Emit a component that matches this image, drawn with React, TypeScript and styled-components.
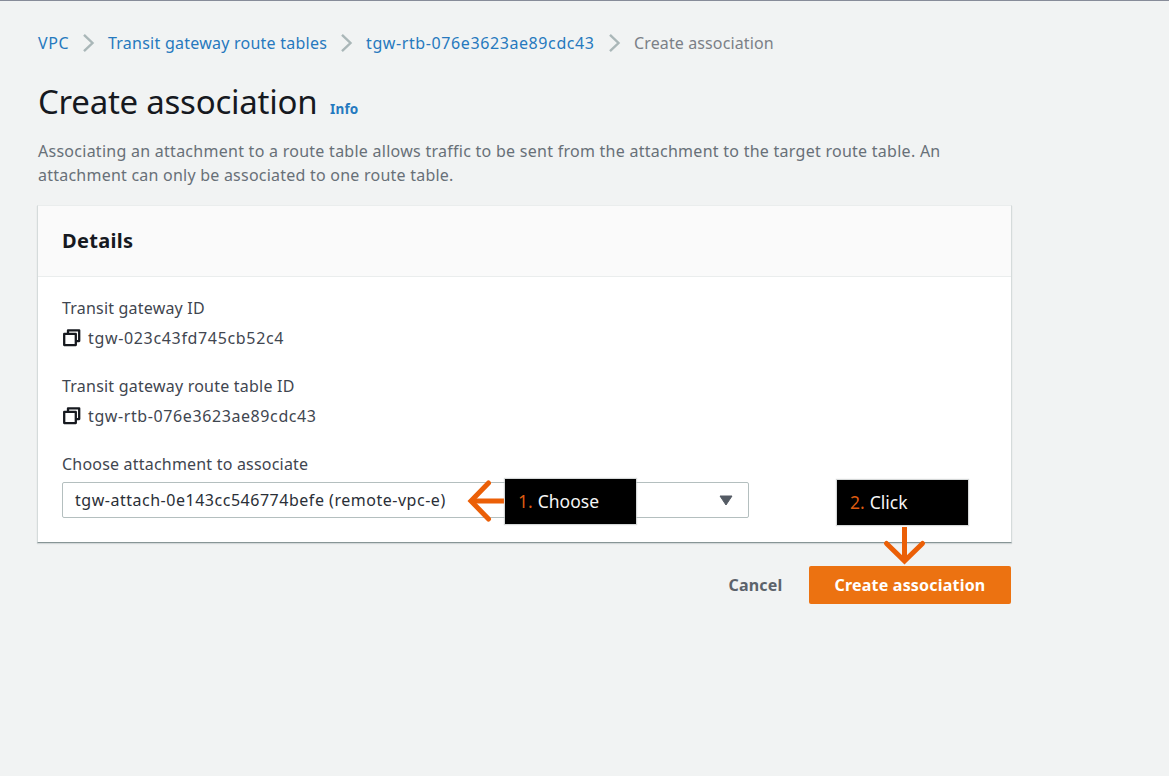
import React from 'react';
import styled, { createGlobalStyle } from 'styled-components';

const GlobalStyle = createGlobalStyle`
  * { box-sizing: border-box; }
  body { margin: 0; background: #f1f3f3; }
`;

const Page = styled.div`
  min-height: 776px;
  padding: 29px 0 0 37px;
  border-top: 1px solid #878c99;
  background: #f1f3f3;
  color: #3f4650;
  font: 16px/24px 'Noto Sans', 'Open Sans', sans-serif;
  overflow: hidden;
`;

const Content = styled.main`
  width: 974px;
`;

const Text = styled.span<{ $track?: number }>`
  letter-spacing: ${(p) => p.$track ?? 0}px;
  white-space: nowrap;
`;

const Breadcrumbs = styled.nav`
  display: flex;
  align-items: center;
  height: 26px;
  padding-left: 1px;
`;

const Crumb = styled(Text)<{ $current?: boolean; $width: number }>`
  width: ${(p) => p.$width}px;
  color: ${(p) => (p.$current ? '#7b8087' : '#2679be')};
`;

const Separator = styled.svg`
  flex: none;
  width: 12px;
  height: 20px;
  margin: 0 13px 0 13px;
`;

const TitleRow = styled.header`
  display: flex;
  align-items: baseline;
  height: 48px;
  margin-top: 22px;
  padding-left: 1px;
`;

const Title = styled.h1`
  width: 292px;
  margin: 0;
  color: #16191f;
  font-size: 33px;
  font-weight: 400;
  line-height: 48px;
`;

const Info = styled(Text)`
  color: #2479bf;
  font-size: 13.5px;
  font-weight: 700;
`;

const Description = styled.p`
  display: flex;
  flex-direction: column;
  margin: 13px 0 18px;
  padding-left: 1px;
  color: #687078;
`;

const Card = styled.section`
  width: 975px;
  height: 338px;
  border: 1px solid #d5dbdb;
  border-top-color: #eaeded;
  border-bottom-color: #879596;
  background: #fff;
  box-shadow: 0 1px 1px rgba(0, 28, 36, 0.12);
`;

const CardHeader = styled.div`
  display: flex;
  align-items: center;
  height: 71px;
  padding-left: 24px;
  border-bottom: 1px solid #eaeded;
  background: #fafafa;
`;

const CardTitle = styled.h2`
  margin: 0;
  color: #16191f;
  font-size: 20px;
  font-weight: 700;
`;

const CardBody = styled.div`
  padding: 19px 24px 0;
`;

const Field = styled.div`
  height: 78px;
`;

const Label = styled.div`
  display: flex;
  height: 24px;
`;

const Value = styled.div`
  display: flex;
  align-items: center;
  height: 24px;
  margin-top: 6px;
`;

const Copy = styled.svg`
  width: 18px;
  height: 18px;
  margin: 0 7px 0 1px;
`;

const Select = styled.div`
  position: relative;
  display: flex;
  align-items: center;
  justify-content: space-between;
  width: 687px;
  height: 36px;
  margin-top: 6px;
  padding: 0 15px 0 12px;
  border: 1px solid #b4bfbf;
  border-radius: 2px;
  color: #2a2f37;
`;

const Caret = styled.svg`
  width: 14px;
  height: 11px;
`;

const Actions = styled.div`
  position: relative;
  display: flex;
  align-items: center;
  justify-content: flex-end;
  height: 38px;
  margin-top: 23px;
`;

const Button = styled.button<{ $primary?: boolean }>`
  width: ${(p) => (p.$primary ? 202 : 107)}px;
  height: 38px;
  padding: 0;
  border: 0;
  border-radius: 2px;
  background: ${(p) => (p.$primary ? '#ec7211' : 'transparent')};
  color: ${(p) => (p.$primary ? '#fff' : '#5c636b')};
  font: 700 16px/24px 'Noto Sans', 'Open Sans', sans-serif;
`;

const Callout = styled.div<{ $left: number; $top: number }>`
  position: absolute;
  left: ${(p) => p.$left}px;
  top: ${(p) => p.$top}px;
  display: flex;
  align-items: center;
  gap: 5px;
  width: 131px;
  height: 45px;
  padding: 0 0 2px 13px;
  background: #000;
  color: #f5f5f5;
  font-size: 17.5px;
  box-shadow: 0 0 1px 1px rgba(190, 195, 195, 0.65);
`;

const Step = styled(Text)`
  color: #dc5a10;
`;

const Arrow = styled.svg<{ $left: number; $top: number }>`
  position: absolute;
  left: ${(p) => p.$left}px;
  top: ${(p) => p.$top}px;
  overflow: visible;
`;

const Chevron = () => (
  <Separator viewBox="0 0 12 20" fill="none" stroke="#aab7b8" strokeWidth="2.4">
    <path d="M1 1.8L9.5 10L1 18.2" />
  </Separator>
);

const CopyIcon = () => (
  <Copy viewBox="0 0 18 18" fill="none" stroke="#16191f" strokeWidth="2.3" strokeLinejoin="round">
    <path d="M5 4.5V1.3H16.2V12.1H13" />
    <path d="M1.2 4.9H12.8V16.1H1.2Z" />
  </Copy>
);

export default function App() {
  return (
    <Page>
      <GlobalStyle />
      <Content>
        <Breadcrumbs>
          <Crumb $width={32} $track={0.6}>VPC</Crumb>
          <Chevron />
          <Crumb $width={220} $track={0.24}>Transit gateway route tables</Crumb>
          <Chevron />
          <Crumb $width={230} $track={0.6}>tgw-rtb-076e3623ae89cdc43</Crumb>
          <Chevron />
          <Crumb $width={140} $track={0.12} $current>Create association</Crumb>
        </Breadcrumbs>
        <TitleRow>
          <Title><Text $track={-0.25}>Create association</Text></Title>
          <Info $track={0.2}>Info</Info>
        </TitleRow>
        <Description>
          <Text $track={0.265}>Associating an attachment to a route table allows traffic to be sent from the attachment to the target route table. An</Text>
          <Text $track={0.23}>attachment can only be associated to one route table.</Text>
        </Description>
        <Card>
          <CardHeader>
            <CardTitle><Text $track={0.3}>Details</Text></CardTitle>
          </CardHeader>
          <CardBody>
            <Field>
              <Label><Text $track={0.2}>Transit gateway ID</Text></Label>
              <Value><CopyIcon /><Text $track={0.66}>tgw-023c43fd745cb52c4</Text></Value>
            </Field>
            <Field>
              <Label><Text $track={0.22}>Transit gateway route table ID</Text></Label>
              <Value><CopyIcon /><Text $track={0.6}>tgw-rtb-076e3623ae89cdc43</Text></Value>
            </Field>
            <Field>
              <Label><Text $track={0.2}>Choose attachment to associate</Text></Label>
              <Select>
                <Text $track={0.52}>tgw-attach-0e143cc546774befe (remote-vpc-e)</Text>
                <Caret viewBox="0 0 14 11"><path d="M1 1H13L7 10Z" fill="#545b64" stroke="#545b64" strokeLinejoin="round" /></Caret>
                <Arrow $left={404} $top={-3} width="38" height="42" fill="none" stroke="#eb5f07" strokeWidth="5">
                  <path d="M37 21H4" />
                  <path d="M21.5 3L4 21L21.5 39" strokeLinecap="round" />
                </Arrow>
                <Callout $left={442} $top={-4}><Step>1.</Step><Text>Choose</Text></Callout>
              </Select>
            </Field>
          </CardBody>
        </Card>
        <Actions>
          <Button><Text $track={0.2}>Cancel</Text></Button>
          <Button $primary><Text $track={0.2}>Create association</Text></Button>
          <Callout $left={800} $top={-86}><Step>2.</Step><Text>Click</Text></Callout>
          <Arrow $left={847} $top={-39} width="42" height="38" fill="none" stroke="#eb5f07" strokeWidth="5">
            <path d="M20.5 0V33" />
            <path d="M2.5 16.5L20.5 34L38.5 16.5" strokeLinecap="round" />
          </Arrow>
        </Actions>
      </Content>
    </Page>
  );
}
